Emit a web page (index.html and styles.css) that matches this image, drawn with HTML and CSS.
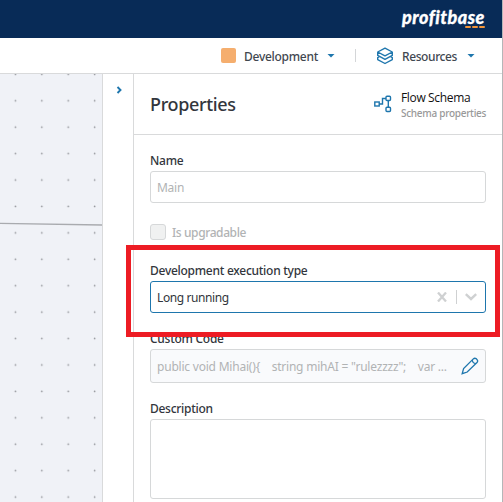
FILE: index.html
```html
<!DOCTYPE html>
<html lang="en">
<head>
<meta charset="utf-8">
<title>Flow Schema</title>
<link rel="stylesheet" href="styles.css">
</head>
<body>
<div class="app">
  <header class="brandbar">
    <div class="logo"><span class="logo-text">profitbase</span><span class="dashes"><i></i><i></i><i></i></span></div>
  </header>
  <nav class="toolbar">
    <span class="swatch"></span>
    <span class="menu menu-dev">Development</span>
    <span class="caret"></span>
    <span class="divider"></span>
    <svg class="layers" width="18" height="18" viewBox="0 0 18 18"><path d="M9 1.2 16.3 5 9 8.8 1.7 5ZM1.7 5v3.4l2 1.1-2 1.1v2L9 16.5l7.3-3.9v-2l-2-1.1 2-1.1V5M1.7 8.4 9 12.3l7.3-3.9"/></svg>
    <span class="menu menu-res">Resources</span>
    <span class="caret"></span>
  </nav>
  <main class="workspace">
    <svg class="canvas" width="102" height="428" viewBox="0 74 102 428">
      <defs><pattern id="dots" x="2.1" y="61.2" width="26.42" height="26.42" patternUnits="userSpaceOnUse"><circle cx="13.3" cy="13.2" r=".85"/></pattern></defs>
      <rect class="dots" y="74" width="102" height="428" fill="url(#dots)"/>
      <path class="wire" d="M0 223.3 102 225"/>
    </svg>
    <aside class="rail"><svg width="7" height="8" viewBox="0 0 7 8"><path d="M1.5 1 4.5 4 1.5 7"/></svg></aside>
    <section class="panel">
      <div class="panel-head">
        <h1>Properties</h1>
        <svg class="flow" width="18" height="18" viewBox="0 0 18 18"><path d="M5 9h3.5V3.5H12M14.3 6v6"/><rect x=".8" y="7" width="4.4" height="4"/><rect x="12" y="1.3" width="4.5" height="4.2" rx="1"/><rect x="12" y="12.3" width="4.5" height="4.2" rx="1"/></svg>
        <div class="schema"><span class="schema-name">Flow Schema</span><span class="schema-sub">Schema properties</span></div>
      </div>
      <form class="fields">
        <label class="label name">Name</label>
        <div class="box muted"><span class="main">Main</span></div>
        <div class="check"><span class="tick"></span><span class="check-text">Is upgradable</span></div>
        <label class="label exec">Development execution type</label>
        <div class="box select"><span class="running">Long running</span>
          <svg class="clear" width="10" height="10" viewBox="0 0 10 10"><path d="M1 .5 9 9.5M9 .5 1 9.5"/></svg>
          <span class="bar"></span>
          <svg class="down" width="12" height="8" viewBox="0 0 12 8"><path d="M.8 1.2 6 6 11.2 1.2"/></svg>
        </div>
        <label class="label code-label">Custom Code</label>
        <div class="box code muted"><span class="code-text">public void Mihai(){&nbsp;&nbsp;&nbsp; string mihAI = "rulezzzz";&nbsp;&nbsp;&nbsp; var ...</span>
          <svg class="pencil" width="18" height="18" viewBox="0 0 18 18"><path d="M1.2 16.7 2.6 11.5 12.3 1.9Q13.6.7 15.1 1.6L16.2 2.8Q17.2 4.3 16 5.5L6.2 15ZM11.3 3Q11.6 6.3 14.9 6.6"/></svg>
        </div>
        <label class="label desc">Description</label>
        <div class="box area"></div>
      </form>
    </section>
  </main>
  <div class="highlight"></div>
  <div class="edge"></div>
</div>
</body>
</html>
```
FILE: styles.css
```css
* { box-sizing: border-box; }
body { margin: 0; overflow: hidden; background: #fff; color: #32363c; font: 500 12px/16px "Noto Sans", "Open Sans", sans-serif; letter-spacing: -.27px; }
.app { position: relative; width: 503px; height: 502px; overflow: hidden; display: flex; flex-direction: column; }
svg { display: block; flex: none; fill: none; stroke: #1e76ad; }
span { white-space: nowrap; }
.brandbar { height: 38px; flex: none; background: #082b57; display: flex; justify-content: flex-end; padding: 7px 18px 0 0; }
.logo { width: 83px; color: #fff; }
.logo-text { display: block; font: italic 900 18px/20px Lato, sans-serif; letter-spacing: .5px; height: 19px; -webkit-text-stroke: .3px #fff; }
.dashes { display: flex; justify-content: flex-end; gap: 1px; padding-right: 0; }
.dashes i { width: 6px; height: 2px; border-radius: 1px; background: #f39539; }
.toolbar { height: 36px; flex: none; border-bottom: 1px solid #d9dadb; display: flex; align-items: center; padding-left: 221px; }
.swatch { width: 15px; height: 15px; margin-right: 8px; border-radius: 2px; background: #f5ae6e; }
.menu { color: #414750; padding-top: 2px; }
.menu-dev { width: 83px; }
.menu-res { width: 65px; letter-spacing: -.4px; }
.caret { width: 8px; height: 4px; background: #1e76ad; clip-path: polygon(0 0, 100% 0, 50% 100%); }
.divider { width: 1px; height: 13px; margin: 0 20px 0 20px; background: #d4d6d8; }
.layers { margin: 0 8px 0 0; stroke-width: 1.4; stroke-linejoin: round; }
.workspace { flex: 1; display: grid; grid-template-columns: 102px 32px 1fr; }
.canvas { background: #f0f2f7; stroke: none; }
.canvas circle { fill: #929499; }
.canvas .wire { stroke: #a9abaf; stroke-width: 1.3; }
.rail { border: solid #d9dadb; border-width: 0 1px; padding: 12px 0 0 13px; }
.rail path { stroke-width: 1.9; }
.panel-head { height: 61px; border-bottom: 1px solid #d9dadb; display: flex; padding-left: 16px; }
h1 { width: 224px; margin: 18px 0 0; color: #32363c; font: 500 18px/24px "Noto Sans", sans-serif; letter-spacing: -.35px; }
.flow { margin-top: 21px; stroke-width: 1.4; }
.schema { display: flex; flex-direction: column; padding: 16px 0 0 9px; }
.schema-name { color: #111; font: 400 12px/16px "Open Sans", sans-serif; letter-spacing: -.35px; }
.schema-sub { color: #999; font-size: 10px; line-height: 14px; letter-spacing: -.28px; }
.fields { display: flex; flex-direction: column; padding: 17px 17px 0 16px; }
.label { height: 19px; line-height: 17px; }
.box { height: 32px; flex: none; border: 1px solid #d6d8d9; border-radius: 3px; display: flex; align-items: center; padding-left: 6px; }
.box > span:not(.bar) { padding-top: 2px; }
.muted { color: #b1b3b4; font-weight: 400; }
.check { display: flex; height: 16px; margin-top: 21px; align-items: center; gap: 6px; color: #b1b3b4; }
.check-text { letter-spacing: -.4px; padding-top: 2px; }
.tick { width: 16px; height: 16px; border: 1px solid #d6d8d9; border-radius: 3px; background: #f0f1f1; }
.exec { margin-top: 22px; }
.select { border-color: #1e76ad; font-weight: 400; letter-spacing: -.4px; }
.running { width: 280px; }
.clear { stroke: #cfd1d2; stroke-width: 2.3; }
.bar { width: 1px; height: 14px; background: #cfd1d2; margin: 0 8px 0 9px; }
.down { stroke: #cfd1d2; stroke-width: 2.4; }
.code-label { margin-top: 17px; }
.code { height: 34px; background: #f9fafc; }
.code-text { width: 304px; letter-spacing: -.21px; }
.pencil { stroke-width: 1.3; }
.desc { margin-top: 17px; }
.area { height: 80px; }
.highlight { position: absolute; left: 126px; top: 245px; width: 374px; height: 92px; border: 5px solid #ed1c24; }
.edge { position: absolute; right: 0; top: 0; width: 1px; height: 100%; background: #b5b6b8; }
```
